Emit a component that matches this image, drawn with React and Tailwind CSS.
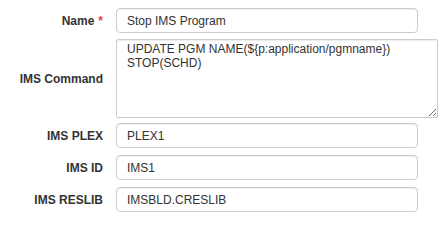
import { useState } from "react";

const fields = [
  { label: "IMS PLEX", value: "PLEX1" },
  { label: "IMS ID", value: "IMS1" },
  { label: "IMS RESLIB", value: "IMSBLD.CRESLIB" },
];

const inputCls =
  "h-[25px] w-[302px] rounded-[4px] border border-[#cccccc] bg-white px-[10px] text-[12px] text-[#333333] shadow-[inset_0_1px_1px_rgba(0,0,0,0.075)] outline-none";

export default function App() {
  const [name, setName] = useState("Stop IMS Program");
  const [command, setCommand] = useState(
    "UPDATE PGM NAME(${p:application/pgmname})\nSTOP(SCHD)"
  );

  return (
    <div className="min-h-screen bg-white pt-[8px] font-['Liberation_Sans',Arial,sans-serif] text-[12px] text-[#333333]">
      <div className="flex items-center">
        <label className="w-[103px] text-right font-bold">
          Name<span className="ml-[4px] text-[#e8413c]">*</span>
        </label>
        <input
          className={`ml-[13px] ${inputCls}`}
          value={name}
          onChange={(e) => setName(e.target.value)}
        />
      </div>

      <div className="mt-[6px] flex items-center">
        <label className="w-[103px] text-right font-bold">IMS Command</label>
        <textarea
          className="ml-[13px] h-[79px] w-[322px] rounded-[2px] border border-[#cccccc] bg-white px-[10px] pt-[3px] text-[12px] leading-[13.5px] text-[#333333] shadow-[inset_0_1px_1px_rgba(0,0,0,0.075)] outline-none"
          value={command}
          onChange={(e) => setCommand(e.target.value)}
        />
      </div>

      {fields.map((f, i) => (
        <div
          key={f.label}
          className={`flex items-center ${i === 0 ? "mt-[5px]" : "mt-[7px]"}`}
        >
          <label className="w-[103px] text-right font-bold">{f.label}</label>
          <input className={`ml-[13px] ${inputCls}`} defaultValue={f.value} />
        </div>
      ))}
    </div>
  );
}
